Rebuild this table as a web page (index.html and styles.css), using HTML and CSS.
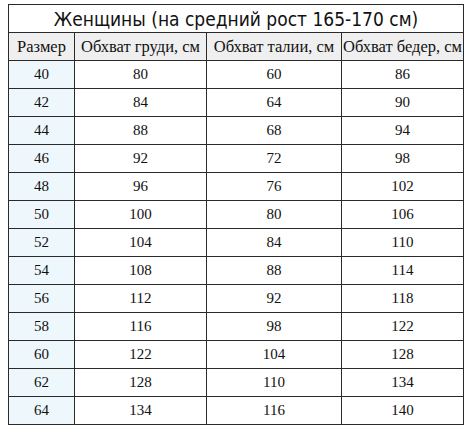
FILE: index.html
```html
<!DOCTYPE html>
<html lang="ru">
<head>
<meta charset="utf-8">
<link rel="stylesheet" href="styles.css">
</head>
<body>
<table class="sizes">
  <colgroup>
    <col class="c1"><col class="c2"><col class="c3"><col class="c4">
  </colgroup>
  <tr class="title"><td colspan="4">Женщины (на средний рост 165-170 см)</td></tr>
  <tr class="head"><td>Размер</td><td>Обхват груди, см</td><td>Обхват талии, см</td><td>Обхват бедер, см</td></tr>
  <tr><td class="size">40</td><td>80</td><td>60</td><td>86</td></tr>
  <tr><td class="size">42</td><td>84</td><td>64</td><td>90</td></tr>
  <tr><td class="size">44</td><td>88</td><td>68</td><td>94</td></tr>
  <tr><td class="size">46</td><td>92</td><td>72</td><td>98</td></tr>
  <tr><td class="size">48</td><td>96</td><td>76</td><td>102</td></tr>
  <tr><td class="size">50</td><td>100</td><td>80</td><td>106</td></tr>
  <tr><td class="size">52</td><td>104</td><td>84</td><td>110</td></tr>
  <tr><td class="size">54</td><td>108</td><td>88</td><td>114</td></tr>
  <tr><td class="size">56</td><td>112</td><td>92</td><td>118</td></tr>
  <tr><td class="size">58</td><td>116</td><td>98</td><td>122</td></tr>
  <tr><td class="size">60</td><td>122</td><td>104</td><td>128</td></tr>
  <tr><td class="size">62</td><td>128</td><td>110</td><td>134</td></tr>
  <tr><td class="size">64</td><td>134</td><td>116</td><td>140</td></tr>
</table>
</body>
</html>
```
FILE: styles.css
```css
html, body {
  margin: 0;
  padding: 0;
  background: #ffffff;
}
body {
  padding: 4px 0 0 8px;
}
.sizes {
  border-collapse: collapse;
  table-layout: fixed;
  width: 455px;
  font-family: "Liberation Serif", "Times New Roman", serif;
  font-size: 15px;
  color: #111;
}
.c1 { width: 66px; }
.c2 { width: 132px; }
.c3 { width: 135px; }
.c4 { width: 122px; }
.sizes td {
  border: 1px solid #2a2a2a;
  height: 27px;
  padding: 0;
  text-align: center;
  vertical-align: middle;
  white-space: nowrap;
  overflow: hidden;
}
.title td {
  font-family: "DejaVu Sans Condensed", "DejaVu Sans", sans-serif;
  font-stretch: condensed;
  font-size: 19px;
  background: #fff;
}
.head td {
  background: #efefef;
  font-size: 16.5px;
}
.sizes td.size {
  background: #eef8fc;
}
```
